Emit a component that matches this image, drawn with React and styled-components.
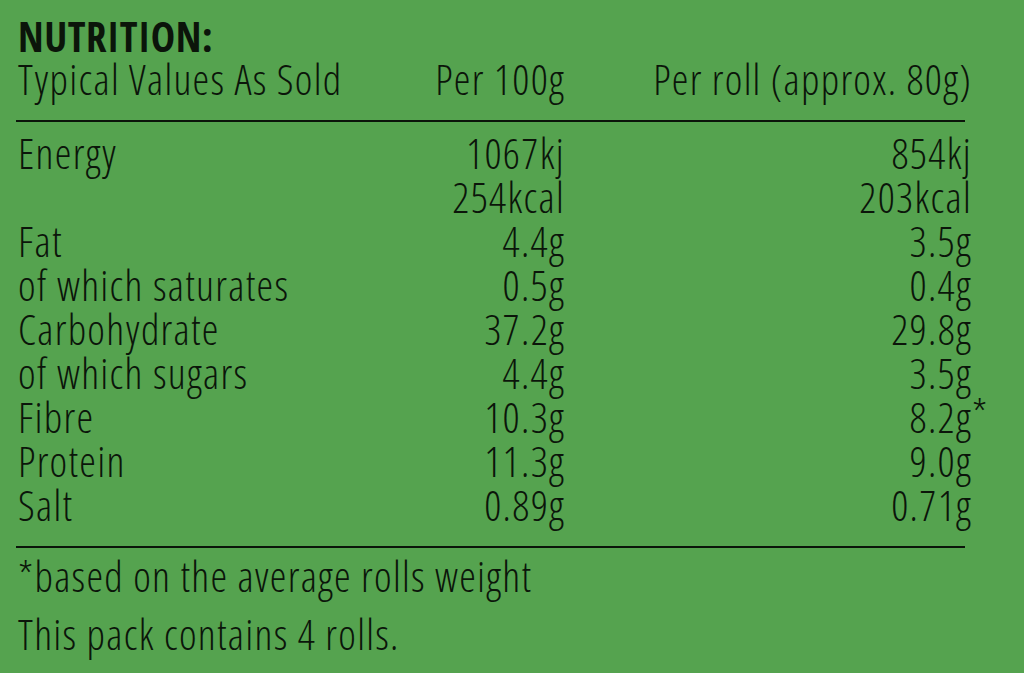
import React from 'react';
import styled, { createGlobalStyle } from 'styled-components';

const Global = createGlobalStyle`
  html, body { margin: 0; background: #55a34f; }
  body { font-family: "Open Sans", "Liberation Sans", sans-serif; color: #0b150a; }
`;

const Label = styled.div`
  width: 1024px;
  height: 673px;
  box-sizing: border-box;
  padding: 16px 0 0 18px;
  background: #55a34f;
  font-stretch: 75%;
  font-weight: 350;
  font-size: 42px;
  letter-spacing: 1.3px;
`;

const Title = styled.h1`
  margin: 0;
  height: 41px;
  font-family: "Open Sans Condensed", "Open Sans", sans-serif;
  font-stretch: 75%;
  font-weight: 700;
  font-size: 41px;
  line-height: 40px;
  letter-spacing: 0.5px;
`;

const Table = styled.div`
  display: grid;
  grid-template-columns: 347px 200px 407px;
  line-height: 44px;
  white-space: nowrap;
`;

const Cell = styled.div`
  text-align: ${p => (p.$num ? 'right' : 'left')};
  position: relative;
`;

const Star = styled.span`
  position: absolute;
  left: 100%;
  top: -3px;
`;

const Rule = styled.hr`
  margin: ${p => p.$top}px 0 ${p => p.$bottom}px -2px;
  width: 949px;
  height: 2px;
  border: 0;
  background: #0b150a;
`;

const Footer = styled.p`
  margin: 0 0 ${p => p.$gap || 0}px;
  line-height: 44px;
`;

const rows = [
  ['Energy', '1067kj', '854kj'],
  ['', '254kcal', '203kcal'],
  ['Fat', '4.4g', '3.5g'],
  ['of which saturates', '0.5g', '0.4g'],
  ['Carbohydrate', '37.2g', '29.8g'],
  ['of which sugars', '4.4g', '3.5g'],
  ['Fibre', '10.3g', '8.2g', true],
  ['Protein', '11.3g', '9.0g'],
  ['Salt', '0.89g', '0.71g'],
];

export default function App() {
  return (
    <>
      <Global />
      <Label>
        <Title>NUTRITION:</Title>
        <Table>
          <Cell>Typical Values As Sold</Cell>
          <Cell $num>Per 100g</Cell>
          <Cell $num>Per roll (approx. 80g)</Cell>
        </Table>
        <Rule $top={19} $bottom={9} />
        <Table>
          {rows.map(([name, per100, perRoll, star], i) => (
            <React.Fragment key={i}>
              <Cell>{name}</Cell>
              <Cell $num>{per100}</Cell>
              <Cell $num>
                {perRoll}
                {star && <Star>*</Star>}
              </Cell>
            </React.Fragment>
          ))}
        </Table>
        <Rule $top={19} $bottom={6} />
        <Footer $gap={14}>*based on the average rolls weight</Footer>
        <Footer>This pack contains 4 rolls.</Footer>
      </Label>
    </>
  );
}
